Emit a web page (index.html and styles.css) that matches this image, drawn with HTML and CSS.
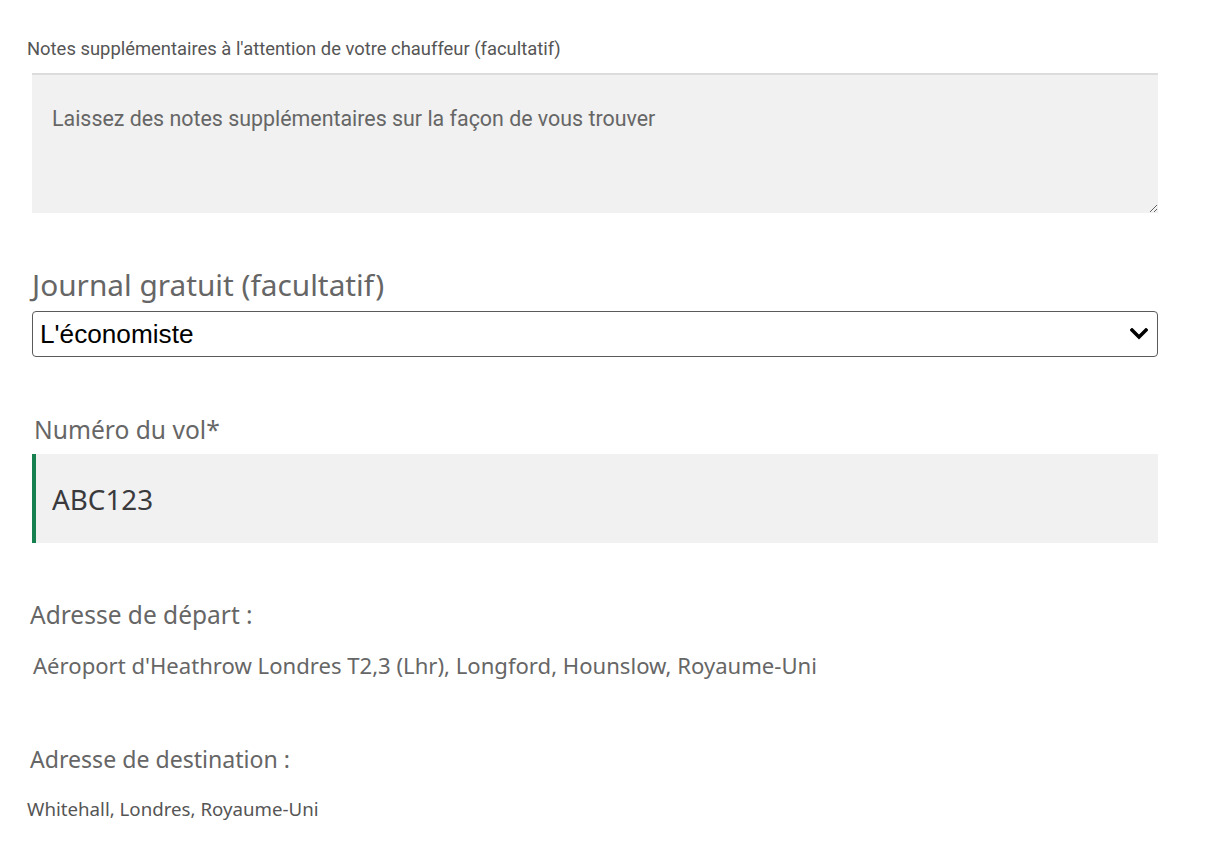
FILE: index.html
```html
<!DOCTYPE html>
<html lang="fr">
<head>
<meta charset="utf-8">
<title>Réservation</title>
<link rel="stylesheet" href="styles.css">
</head>
<body>
<main class="form">
  <label class="notes-label" for="notes">Notes supplémentaires à l'attention de votre chauffeur (facultatif)</label>
  <textarea id="notes" class="notes" placeholder="Laissez des notes supplémentaires sur la façon de vous trouver"></textarea>

  <label class="field-label journal-label" for="journal">Journal gratuit (facultatif)</label>
  <div class="select-wrap">
    <select id="journal" class="select">
      <option>L'économiste</option>
    </select>
    <svg class="chevron" width="18" height="12" viewBox="0 0 18 12"><polyline points="2,2 9,9 16,2" fill="none" stroke="#000" stroke-width="3.4" stroke-linecap="square"/></svg>
  </div>

  <label class="field-label vol-label" for="vol">Numéro du vol*</label>
  <input id="vol" class="vol" type="text" value="ABC123">

  <div class="addr-label addr-dep">Adresse de départ :</div>
  <div class="addr-value">Aéroport d'Heathrow Londres T2,3 (Lhr), Longford, Hounslow, Royaume-Uni</div>

  <div class="addr-label addr-dest">Adresse de destination :</div>
  <div class="addr-small">Whitehall, Londres, Royaume-Uni</div>
</main>
</body>
</html>
```

FILE: styles.css
```css
html, body {
  margin: 0;
  padding: 0;
  background: #fff;
}

.form {
  display: flex;
  flex-direction: column;
  align-items: stretch;
  padding: 39px 52px 0 32px;
  font-family: "Noto Sans", sans-serif;
}

.notes-label {
  font-family: Roboto, sans-serif;
  font-size: 18.4px;
  line-height: 20px;
  color: #555;
  margin-left: -5px;
  margin-bottom: 14px;
}

.notes {
  display: block;
  box-sizing: border-box;
  height: 140px;
  margin: 0;
  padding: 32px 20px;
  border: none;
  border-top: 2px solid #dcdcdc;
  background: #f1f1f1;
  font-family: Roboto, sans-serif;
  font-size: 21.4px;
  line-height: 24px;
  color: #333;
  resize: vertical;
  outline: none;
}

.notes::placeholder {
  color: #666;
}

.field-label {
  color: #666;
}

.journal-label {
  font-size: 29.8px;
  line-height: 34px;
  margin-top: 55px;
  margin-bottom: 9px;
}

.select-wrap {
  position: relative;
}

.select {
  display: block;
  width: 100%;
  box-sizing: border-box;
  height: 46px;
  margin: 0;
  padding: 0 40px 0 7px;
  border: 1.5px solid #5a5a5a;
  border-radius: 4px;
  background: #fff;
  font-family: "Liberation Sans", Arial, sans-serif;
  font-size: 26.2px;
  color: #000;
  appearance: none;
  -webkit-appearance: none;
  outline: none;
}

.chevron {
  position: absolute;
  right: 10px;
  top: 17px;
  pointer-events: none;
}

.vol-label {
  font-size: 24.6px;
  line-height: 30px;
  margin-top: 58px;
  margin-left: 2px;
  margin-bottom: 9px;
}

.vol {
  display: block;
  box-sizing: border-box;
  width: 100%;
  height: 89px;
  margin: 0;
  padding: 0 16px;
  border: none;
  border-left: 4px solid #16804e;
  background: #f1f1f1;
  font-family: "Noto Sans", sans-serif;
  font-size: 27.8px;
  color: #3a3a3d;
  outline: none;
}

.addr-label {
  line-height: 30px;
  color: #666;
  margin-left: -2px;
}

.addr-dep {
  font-size: 24.5px;
  margin-top: 57px;
}

.addr-value {
  font-size: 22.1px;
  line-height: 28px;
  color: #666;
  margin-top: 21px;
  margin-left: 1px;
}

.addr-dest {
  font-size: 23.1px;
  margin-top: 65px;
}

.addr-small {
  font-size: 18.7px;
  line-height: 24px;
  color: #555;
  margin-top: 23px;
  margin-left: -5px;
}
```
